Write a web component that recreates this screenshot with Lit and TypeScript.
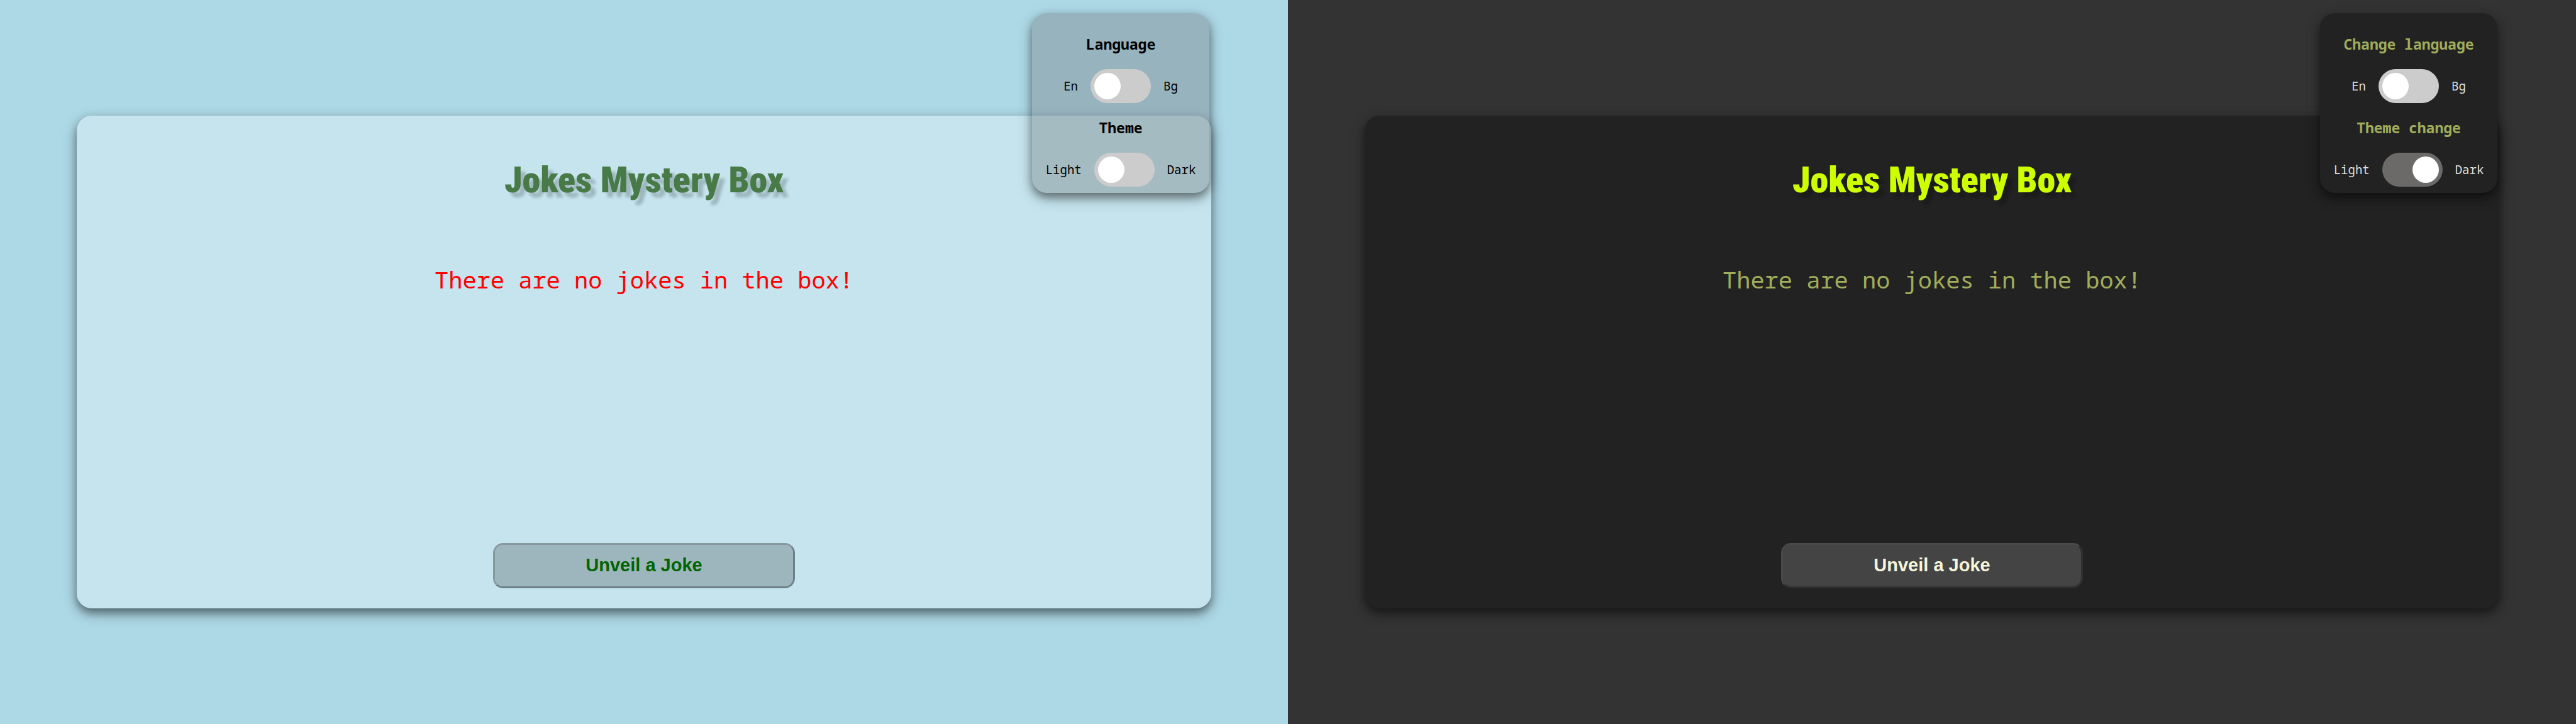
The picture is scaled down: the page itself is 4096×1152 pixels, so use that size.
import { LitElement, html, css } from "lit";
import { customElement, property } from "lit/decorators.js";

@customElement("toggle-row")
class ToggleRow extends LitElement {
  @property() heading = "";
  @property() off = "";
  @property() on = "";
  @property({ type: Boolean }) checked = false;

  static styles = css`
    :host {
      display: flex;
      flex-direction: column;
      align-items: center;
      gap: 21px;
    }
    .heading {
      margin: 0;
      font-size: 23px;
      line-height: 38px;
      font-weight: 700;
      color: var(--heading);
      white-space: nowrap;
    }
    .row {
      display: flex;
      align-items: center;
      gap: 20px;
      font-size: 19px;
      line-height: 24px;
      color: var(--label);
    }
    .switch {
      appearance: none;
      box-sizing: border-box;
      display: flex;
      width: 96px;
      height: 54px;
      margin: 0;
      padding: 6px;
      border-radius: 27px;
      background: #ccc;
      cursor: pointer;
    }
    .switch::before {
      content: "";
      width: 42px;
      height: 42px;
      border-radius: 50%;
      background: #fff;
    }
    .switch:checked {
      justify-content: flex-end;
      background: #6b6a68;
    }
  `;

  render() {
    return html`
      <h2 class="heading">${this.heading}</h2>
      <label class="row">
        <span>${this.off}</span>
        <input class="switch" type="checkbox" .checked=${this.checked} />
        <span>${this.on}</span>
      </label>
    `;
  }
}

@customElement("joke-page")
class JokePage extends LitElement {
  @property({ reflect: true }) theme = "light";

  static styles = css`
    :host {
      --page: #add8e6;
      --card: rgba(255, 255, 255, 0.3);
      --panel: rgba(112, 118, 122, 0.37);
      --heading: #000;
      --label: #000;
      --title: #487a48;
      --message: #f00;
      --button: rgba(0, 0, 0, 0.2);
      --button-text: #006400;
      --edge-light: #88989f;
      --edge-dark: #708087;
      position: relative;
      display: flex;
      flex: 1;
      flex-direction: column;
      box-sizing: border-box;
      min-height: 100vh;
      padding: 184px 122px;
      background: var(--page);
      font-family: Consolas, "Noto Sans Mono", "DejaVu Sans Mono", monospace;
    }
    :host([theme="dark"]) {
      --page: #333;
      --card: #222;
      --panel: #222;
      --heading: #a0ad5b;
      --label: #ddd;
      --title: #ceff00;
      --message: #a0ad5b;
      --button: #444;
      --button-text: #f5f5dc;
      --edge-light: #4a4a4a;
      --edge-dark: #303030;
    }
    .card,
    .panel {
      border-radius: 24px;
      box-shadow: 0 7px 14px rgba(0, 0, 0, 0.4), 0 8px 24px rgba(0, 0, 0, 0.24);
    }
    .card {
      display: flex;
      flex: 1;
      flex-direction: column;
      align-items: center;
      padding: 62px 32px 32px;
      background: var(--card);
    }
    .title {
      margin: 0;
      font: 900 58px/80px Impact, "Roboto Condensed", "DejaVu Sans Condensed", sans-serif;
      color: var(--title);
      text-shadow: 8px 8px 4px rgba(0, 0, 0, 0.2);
      white-space: nowrap;
    }
    .message {
      margin: 95px 0 auto;
      font-size: 37px;
      line-height: 48px;
      color: var(--message);
    }
    .reveal {
      box-sizing: border-box;
      width: 480px;
      max-width: 100%;
      height: 72px;
      padding: 0 0 2px;
      border: 3px solid;
      border-color: var(--edge-light) var(--edge-dark) var(--edge-dark) var(--edge-light);
      border-radius: 16px;
      background: var(--button);
      background-clip: padding-box;
      color: var(--button-text);
      font: 700 29px/32px "Liberation Sans", Arial, sans-serif;
      cursor: pointer;
    }
    .panel {
      position: absolute;
      top: 21px;
      right: 125px;
      box-sizing: border-box;
      width: 282px;
      display: flex;
      flex-direction: column;
      gap: 20px;
      padding: 30px 0 10px;
      background: var(--panel);
    }
  `;

  render() {
    const dark = this.theme === "dark";
    return html`
      <main class="card">
        <h1 class="title">Jokes Mystery Box</h1>
        <p class="message">There are no jokes in the box!</p>
        <button class="reveal" type="button">Unveil a Joke</button>
      </main>
      <aside class="panel">
        <toggle-row heading=${dark ? "Change language" : "Language"} off="En" on="Bg"></toggle-row>
        <toggle-row
          heading=${dark ? "Theme change" : "Theme"}
          off="Light"
          on="Dark"
          ?checked=${dark}
        ></toggle-row>
      </aside>
    `;
  }
}

@customElement("app-root")
class AppRoot extends LitElement {
  static styles = css`
    :host {
      display: flex;
      min-height: 100vh;
    }
  `;

  render() {
    return html`
      <joke-page theme="light"></joke-page>
      <joke-page theme="dark"></joke-page>
    `;
  }
}
